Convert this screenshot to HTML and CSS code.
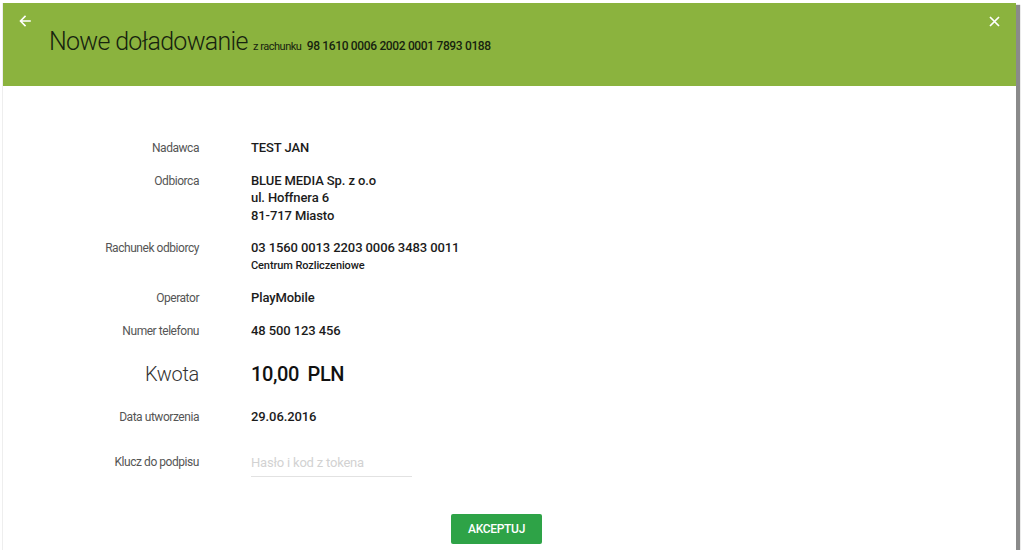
FILE: index.html
```html
<!DOCTYPE html>
<html lang="pl">
<head>
<meta charset="utf-8">
<title>Nowe doładowanie</title>
<link rel="stylesheet" href="styles.css">
</head>
<body>
<div class="card">
  <header class="head">
    <div class="head-back">
      <svg class="icon-back" width="12" height="12" viewBox="0 0 12 12" aria-hidden="true">
        <path d="M11 6H1.8M6 1.5 1.5 6 6 10.5" fill="none" stroke="#fff" stroke-width="1.6" stroke-linecap="square"/>
      </svg>
    </div>
    <h1 class="title">Nowe doładowanie <span class="from">z rachunku</span> <span class="acc">98 1610 0006 2002 0001 7893 0188</span></h1>
    <div class="head-close">
      <svg class="icon-close" width="11" height="11" viewBox="0 0 11 11" aria-hidden="true">
        <path d="M1 1 10 10M10 1 1 10" fill="none" stroke="#fff" stroke-width="1.7"/>
      </svg>
    </div>
  </header>
  <main class="body">
    <div class="row">
      <div class="label">Nadawca</div>
      <div class="value">TEST JAN</div>
    </div>
    <div class="row">
      <div class="label">Odbiorca</div>
      <div class="value multi">BLUE MEDIA Sp. z o.o<br>ul. Hoffnera 6<br>81-717 Miasto</div>
    </div>
    <div class="row">
      <div class="label">Rachunek odbiorcy</div>
      <div class="value">03 1560 0013 2203 0006 3483 0011<div class="sub">Centrum Rozliczeniowe</div></div>
    </div>
    <div class="row">
      <div class="label">Operator</div>
      <div class="value">PlayMobile</div>
    </div>
    <div class="row">
      <div class="label">Numer telefonu</div>
      <div class="value">48 500 123 456</div>
    </div>
    <div class="row row-big">
      <div class="label big">Kwota</div>
      <div class="value big">10,00 <span class="cur">PLN</span></div>
    </div>
    <div class="row">
      <div class="label">Data utworzenia</div>
      <div class="value">29.06.2016</div>
    </div>
    <div class="row row-input">
      <div class="label lbl-input">Klucz do podpisu</div>
      <div class="value"><input class="field" type="password" placeholder="Hasło i kod z tokena"></div>
    </div>
    <div class="actions">
      <button class="btn" type="button">AKCEPTUJ</button>
    </div>
  </main>
</div>
</body>
</html>
```

FILE: styles.css
```css
html, body {
  margin: 0;
  padding: 0;
  background: #ffffff;
}
body {
  font-family: Roboto, "Liberation Sans", Arial, sans-serif;
  color: #222;
}
.card {
  margin: 3px 0 0 2px;
  width: 1014px;
  height: 547px;
  background: #fff;
  box-shadow: 3px 3px 1px 1px #8a8a8a;
  border-left: 1px solid #eeeeee;
  box-sizing: border-box;
}
.head {
  height: 83px;
  background: #8bb33e;
  display: grid;
  grid-template-columns: 46px 1fr auto;
  align-items: start;
}
.head-back {
  padding: 12px 0 0 16px;
  line-height: 0;
}
.head-close {
  padding: 13px 16px 0 0;
  line-height: 0;
}
.title {
  margin: 24px 0 0 0;
  font-size: 25px;
  font-weight: 300;
  letter-spacing: -0.7px;
  line-height: 30px;
  color: #17230f;
  white-space: nowrap;
}
.from {
  font-size: 11px;
  font-weight: 400;
  letter-spacing: -0.5px;
}
.acc {
  font-size: 12px;
  font-weight: 500;
  letter-spacing: -0.35px;
}
.body {
  padding-top: 53px;
}
.row {
  display: grid;
  grid-template-columns: 196px 1fr;
  column-gap: 52px;
  margin-bottom: 14.5px;
  line-height: 18px;
}
.label {
  text-align: right;
  font-size: 12px;
  letter-spacing: -0.45px;
  color: #555;
  font-weight: 400;
}
.value {
  font-size: 13px;
  font-weight: 500;
  letter-spacing: -0.1px;
  color: #1b1b1b;
}
.value.multi {
  line-height: 17.5px;
}
.sub {
  font-size: 11px;
  font-weight: 500;
}
.row-big {
  margin-top: 21px;
  margin-bottom: 21px;
  line-height: 26px;
}
.label.big {
  font-size: 20px;
  font-weight: 300;
  letter-spacing: -0.3px;
  color: #333;
}
.value.big {
  font-size: 20px;
  font-weight: 500;
  letter-spacing: -0.4px;
  color: #111;
}
.cur {
  margin-left: 4px;
}
.row-input {
  margin-top: 25px;
  margin-bottom: 0;
}
.lbl-input {
  padding-top: 2px;
}
.field {
  display: block;
  width: 161px;
  height: 26px;
  box-sizing: border-box;
  margin: 0;
  padding: 0 0 1px 0;
  border: 0;
  border-bottom: 1px solid #e2e2e2;
  outline: none;
  font-family: Roboto, "Liberation Sans", Arial, sans-serif;
  font-size: 13px;
  letter-spacing: -0.2px;
  color: #333;
  background: transparent;
}
.field::placeholder {
  color: #d2d2d2;
}
.actions {
  padding: 37px 0 0 448px;
}
.btn {
  width: 91px;
  height: 30px;
  border: 0;
  border-radius: 2px;
  background: #2ea347;
  color: #fff;
  font-family: Roboto, "Liberation Sans", Arial, sans-serif;
  font-size: 12px;
  font-weight: 500;
  letter-spacing: -0.3px;
  padding: 0;
  cursor: pointer;
}
```
